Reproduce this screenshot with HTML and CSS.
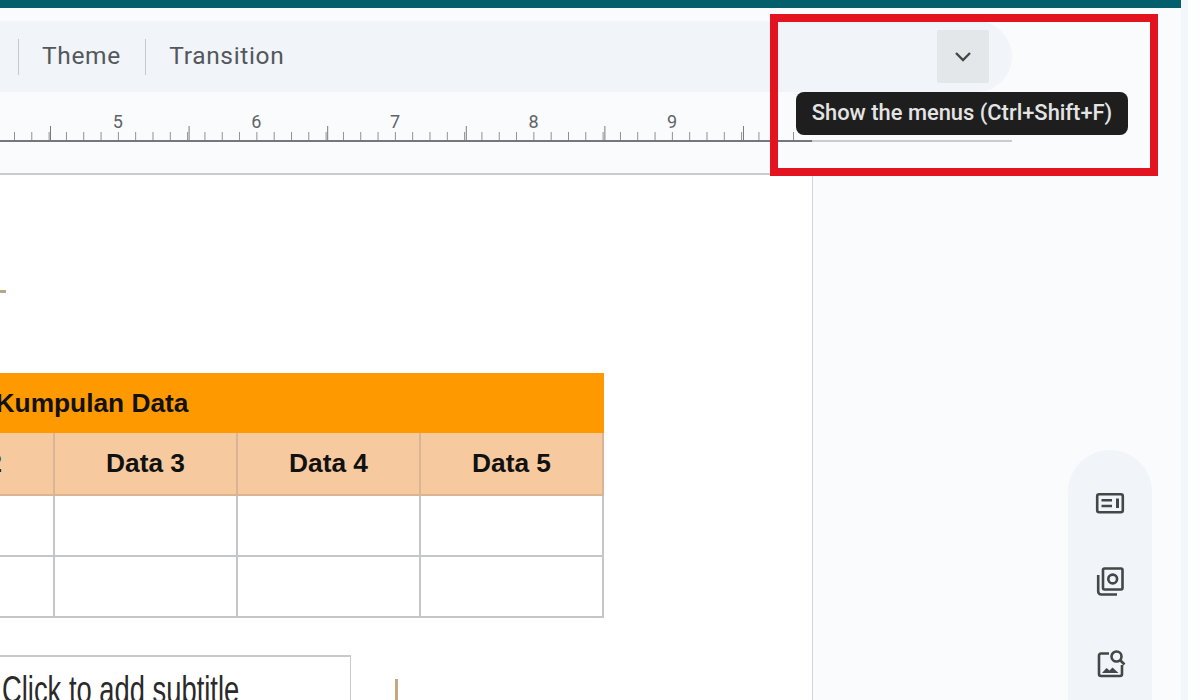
FILE: index.html
```html
<!DOCTYPE html>
<html lang="en">
<head>
<meta charset="utf-8">
<title>Slides editor</title>
<link rel="stylesheet" href="styles.css">
</head>
<body>
<div class="app">
  <div class="topbar"></div>
  <div class="toolbar">
    <span class="sep"></span>
    <span class="tool">Theme</span>
    <span class="sep"></span>
    <span class="tool">Transition</span>
    <button class="toggle" type="button" aria-label="Show the menus">
      <svg width="20" height="12" viewBox="0 0 20 12"><path d="M3 2l7 7 7-7" fill="none" stroke="#444746" stroke-width="2.4"/></svg>
    </button>
  </div>
  <div class="ruler">
    <div class="nums"><span>5</span><span>6</span><span>7</span><span>8</span><span>9</span></div>
    <div class="ticks"></div>
    <div class="rule"><div class="rule-dark"></div></div>
  </div>
  <div class="main">
    <div class="canvas">
      <div class="guide"></div>
      <table class="sheet">
        <colgroup><col class="c0"><col class="cn"><col class="cn"><col class="cn"><col class="cn"><col class="cn"></colgroup>
        <tr class="head"><th colspan="6">Kumpulan Data</th></tr>
        <tr class="sub"><th></th><th>Data 1</th><th>Data 2</th><th>Data 3</th><th>Data 4</th><th>Data 5</th></tr>
        <tr><td></td><td></td><td></td><td></td><td></td><td></td></tr>
        <tr><td></td><td></td><td></td><td></td><td></td><td></td></tr>
      </table>
      <div class="lower">
        <div class="subtitle"><span class="subtitle-text">Click to add subtitle</span></div>
        <div class="caret"></div>
      </div>
    </div>
    <div class="panel">
      <div class="rail">
        <svg width="32" height="22" viewBox="0 0 32 22" fill="none" stroke="#444746" stroke-width="2.6"><rect x="3.2" y="2.2" width="25.6" height="18" rx="2"/><path d="M7.5 8.2h10.5M7.5 14h10.5"/><path d="M23.5 6.5v9.5" stroke-width="3"/></svg>
        <svg width="32" height="30" viewBox="0 0 32 30" fill="none" stroke="#444746" stroke-width="2.6"><rect x="9" y="1.5" width="19.5" height="21" rx="1.5"/><circle cx="18.7" cy="12" r="4.4"/><path d="M4.2 8v16.5a3 3 0 0 0 3 3H23"/></svg>
        <svg width="32" height="28" viewBox="0 0 32 28" fill="none" stroke="#444746" stroke-width="2.6"><path d="M15 3.5H7a2 2 0 0 0-2 2V24a2 2 0 0 0 2 2h19a2 2 0 0 0 2-2V15"/><circle cx="22.5" cy="6.5" r="5"/><path d="M26.5 10.5l4 4"/><path d="M8 23l4.5-5 3 2.5 3-3 6 5.5z" fill="#444746" stroke="none"/></svg>
      </div>
    </div>
  </div>
</div>
<div class="tooltip">Show the menus (Ctrl+Shift+F)</div>
<div class="callout"></div>
</body>
</html>
```
FILE: styles.css
```css
* { box-sizing: border-box; }
html, body { margin: 0; padding: 0; }
body {
  position: relative;
  width: 1200px;
  height: 700px;
  overflow: hidden;
  background: #fdfeff;
  font-family: Roboto, "Liberation Sans", sans-serif;
}
.app {
  width: 1188px;
  height: 700px;
  display: flex;
  flex-direction: column;
  background: #f9fbfd;
  border-right: 7px solid #f3f6fa;
}
.topbar { height: 8px; background: #025f6b; flex: none; }
.toolbar {
  flex: none;
  margin-top: 13px;
  width: 1012px;
  height: 71px;
  display: flex;
  align-items: center;
  background: #f1f4f8;
  border-radius: 0 36px 36px 0;
  padding-left: 18px;
}
.sep { width: 1px; height: 36px; background: #c6c9cc; }
.tool {
  font-size: 24.5px;
  line-height: 28px;
  margin-top: -1px;
  color: #54585c;
  padding: 0 24.5px 0 23px;
  letter-spacing: 0.65px;
}
.toggle {
  margin-left: auto;
  margin-right: 23px;
  width: 52px;
  height: 53px;
  border: 0;
  border-radius: 2px;
  padding: 0;
  background: #e4e7ea;
  display: flex;
  align-items: center;
  justify-content: center;
}
.ruler { flex: none; width: 1012px; height: 81px; }
.nums {
  display: flex;
  padding: 21px 0 0 48.5px;
  height: 37px;
  font-size: 18px;
  line-height: 18px;
  color: #606468;
}
.nums span { width: 138.6px; text-align: center; }
.ticks {
  margin-top: -3px;
  width: 800px;
  height: 14px;
  background-image:
    linear-gradient(to right, #777b7f 1px, transparent 1px),
    linear-gradient(to right, #8b8f93 1px, transparent 1px);
  background-size: 138.6px 14px, 17.325px 8px;
  background-position: 50px 0, 14px 6px;
  background-repeat: repeat-x;
}
.rule { height: 2px; background: #c9cccf; }
.rule-dark { width: 812px; height: 2px; background: #74787c; }
.main { flex: 1; display: flex; min-height: 0; }
.canvas {
  width: 813px;
  height: 100%;
  overflow: hidden;
  background: #fff;
  border-top: 2px solid #c9cbcd;
  border-right: 1px solid #d2d4d7;
}
.guide { width: 6px; height: 3px; margin-top: 115px; background: #b9a689; }
.sheet {
  margin: 80px 0 0 -420px;
  width: 1022px;
  table-layout: fixed;
  border-collapse: collapse;
  font-family: "Liberation Sans", Arial, sans-serif;
  font-size: 26.3px;
  color: #111;
}
.c0 { width: 107px; }
.cn { width: 183px; }
.sheet th, .sheet td { padding: 0; border: 2px solid #c4c6c8; height: 61px; font-weight: 700; text-align: center; }
.sheet .head th { background: #ff9900; border-color: #ff9900; height: 58px; }
.sheet .sub th { background: #f6c99f; border-color: #d9b595; height: 63px; }
.lower { display: flex; margin-top: 37px; }
.subtitle {
  width: 351px;
  height: 60px;
  border-top: 2px solid #c9c9c9;
  border-right: 1px solid #c9c9c9;
  padding: 11px 0 0 2px;
  font-family: "Liberation Sans", sans-serif;
  font-size: 38px;
  line-height: 44px;
  color: #2a2a2a;
  white-space: nowrap;
}
.subtitle-text { display: inline-block; transform: scaleX(0.72); transform-origin: left center; }
.caret { width: 3px; height: 40px; margin: 24px 0 0 44px; background: #c6a87e; }
.panel {
  flex: 1;
  display: flex;
  justify-content: flex-end;
  padding: 277px 29px 0 0;
}
.rail {
  width: 84px;
  height: 260px;
  padding-top: 42px;
  background: #f1f4f9;
  border-radius: 42px 42px 0 0;
  display: flex;
  flex-direction: column;
  align-items: center;
  gap: 53px;
}
.rail svg { flex: none; }
.tooltip {
  position: absolute;
  left: 796px;
  top: 92px;
  width: 332px;
  height: 43px;
  border-radius: 8px;
  background: #1e1e1f;
  color: #e4e4e4;
  font-size: 21.9px;
  font-weight: 500;
  line-height: 41px;
  text-align: center;
  white-space: nowrap;
}
.callout {
  position: absolute;
  left: 770px;
  top: 14px;
  width: 388px;
  height: 162px;
  border: 8.5px solid #e3141f;
}
```
